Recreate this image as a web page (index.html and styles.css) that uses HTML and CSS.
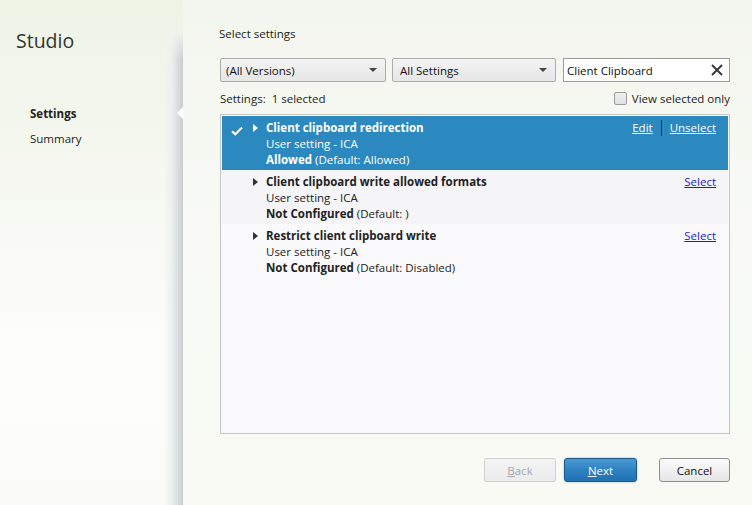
FILE: index.html
```html
<!DOCTYPE html>
<html>
<head>
<meta charset="utf-8">
<link rel="stylesheet" href="styles.css">
</head>
<body>
<div class="app">
  <aside class="sidebar">
    <div class="nav">
      <h1 class="brand">Studio</h1>
      <ul class="steps">
        <li class="step active">Settings</li>
        <li class="step">Summary</li>
      </ul>
    </div>
    <div class="shade"><span class="pointer"></span></div>
  </aside>
  <main class="main">
    <div class="heading">Select settings</div>
    <div class="filters">
      <div class="select sel-versions"><span>(All Versions)</span><span class="caret"></span></div>
      <div class="select sel-all"><span>All Settings</span><span class="caret"></span></div>
      <div class="search"><span>Client Clipboard</span>
        <svg class="clear" width="12" height="12" viewBox="0 0 12 12"><path d="M1 1L11 11M11 1L1 11" stroke="#333" stroke-width="1.8"/></svg>
      </div>
    </div>
    <div class="status">
      <span>Settings:&nbsp; 1 selected</span>
      <label class="check"><span class="box"></span>View selected only</label>
    </div>
    <div class="list">
      <div class="row selected">
        <div class="mark"><svg width="12" height="10" viewBox="0 0 12 10"><path d="M1 5.2L4.3 8.3L11 1.5" fill="none" stroke="#fff" stroke-width="2"/></svg></div>
        <div class="arrow"><span class="tri"></span></div>
        <div class="info">
          <div class="title">Client clipboard redirection</div>
          <div>User setting - ICA</div>
          <div><b>Allowed</b> (Default: Allowed)</div>
        </div>
        <div class="actions"><a>Edit</a><span class="sep"></span><a>Unselect</a></div>
      </div>
      <div class="row alt">
        <div class="mark"></div>
        <div class="arrow"><span class="tri"></span></div>
        <div class="info">
          <div class="title">Client clipboard write allowed formats</div>
          <div>User setting - ICA</div>
          <div><b>Not Configured</b> (Default: )</div>
        </div>
        <div class="actions"><a>Select</a></div>
      </div>
      <div class="row">
        <div class="mark"></div>
        <div class="arrow"><span class="tri"></span></div>
        <div class="info">
          <div class="title">Restrict client clipboard write</div>
          <div>User setting - ICA</div>
          <div><b>Not Configured</b> (Default: Disabled)</div>
        </div>
        <div class="actions"><a>Select</a></div>
      </div>
    </div>
    <div class="buttons">
      <button class="btn disabled"><u>B</u>ack</button>
      <button class="btn primary"><u>N</u>ext</button>
      <button class="btn cancel">Cancel</button>
    </div>
  </main>
</div>
</body>
</html>
```
FILE: styles.css
```css
* { box-sizing: border-box; }
html, body { margin: 0; padding: 0; }
body {
  width: 752px;
  height: 505px;
  overflow: hidden;
  font-family: "Open Sans", "Noto Sans", sans-serif;
  font-size: 11.5px;
  color: #222;
  background: linear-gradient(170deg, #eef3e6 0%, #f6f9f1 40%, #fbfcf8 100%);
}
.app { display: flex; height: 505px; }
.sidebar {
  width: 184px;
  display: flex;
  background: linear-gradient(180deg, #eef3e6 0%, #f6f8f1 35%, #fdfdfc 70%, #fbfcf7 100%);
}
.nav { flex: 1; }
.brand {
  margin: 29px 0 0 16px;
  font-size: 19.5px;
  font-weight: 400;
  color: #333;
  line-height: 24px;
}
.steps { list-style: none; margin: 48px 0 0 30px; padding: 0; }
.step { height: 25px; line-height: 25px; color: #222; }
.step.active { font-weight: 700; }
.shade {
  width: 19px;
  margin-top: 30px;
  position: relative;
  background: linear-gradient(90deg, rgba(255,255,255,0) 0%, #eceef0 40%, #d4d6da 85%, #c9cbcf 100%);
}
.shade::before {
  content: "";
  position: absolute;
  left: 0; right: 0; top: 0; height: 30px;
  background: linear-gradient(180deg, #f1f4ec, rgba(241,244,236,0));
}
.pointer {
  position: absolute;
  left: 13px;
  top: 77px;
  width: 0; height: 0;
  border-top: 6px solid transparent;
  border-bottom: 6px solid transparent;
  border-right: 6px solid #fff;
}
.main {
  flex: 1;
  padding: 25px 22px 0 36px;
  display: flex;
  flex-direction: column;
  background: linear-gradient(180deg, #f3f6ee 0%, #f9faf6 50%, #f8faf3 100%);
}
.heading { height: 18px; line-height: 18px; color: #222; }
.filters { display: flex; margin-top: 15px; height: 24px; }
.select {
  display: flex; align-items: center; justify-content: space-between;
  height: 24px;
  border: 1px solid #acacac;
  border-radius: 2px;
  background: linear-gradient(180deg, #f4f4f4, #e6e6e6);
  padding: 0 8px 0 5px;
  color: #111;
}
.sel-versions { width: 166px; margin-left: 1px; }
.sel-all { width: 164px; margin-left: 6px; padding-left: 7px; }
.caret {
  width: 0; height: 0;
  border-left: 4px solid transparent;
  border-right: 4px solid transparent;
  border-top: 4px solid #444;
}
.search {
  width: 167px; margin-left: 7px; height: 24px;
  border: 1px solid #9c9c9c;
  background: #fff;
  display: flex; align-items: center; justify-content: space-between;
  padding: 0 6px 0 3px; color: #111;
}
.status {
  display: flex; justify-content: space-between; align-items: center;
  height: 20px; margin-top: 6px; padding-left: 1px;
}
.check { display: flex; align-items: center; gap: 5px; margin-right: 0; }
.box {
  width: 13px; height: 13px;
  border: 1px solid #9a9a9a; border-radius: 2px;
  background: linear-gradient(180deg, #f0f0f0, #e0e0e0);
}
.list {
  margin-top: 6px;
  margin-left: 1px;
  height: 320px;
  border: 1px solid #c6c6c6;
  background: #fafafc;
  padding: 1px;
}
.row { display: flex; height: 54px; padding-top: 4px; line-height: 16px; color: #222; }
.row.alt { background: #f5f5f7; }
.row.selected { background: #2b89c0; color: #fff; }
.mark { width: 23px; padding: 4px 0 0 9px; }
.arrow { width: 21px; padding-left: 8px; padding-top: 4px; }
.tri {
  display: block; width: 0; height: 0;
  border-top: 4px solid transparent;
  border-bottom: 4px solid transparent;
  border-left: 5px solid #333;
}
.selected .tri { border-left-color: #fff; }
.info { flex: 1; }
.title { font-weight: 700; }
.actions { display: flex; align-items: flex-start; padding-right: 12px; }
.actions a { text-decoration: underline; color: #1a1ad0; }
.selected .actions a { color: #fff; }
.sep { width: 1px; height: 16px; background: #1a1aff; margin: 0 8px; }
.buttons {
  display: flex; justify-content: flex-end;
  margin-top: 24px; gap: 0;
}
.btn {
  height: 24px; font-family: inherit; font-size: 11.5px;
  border-radius: 3px; padding: 0;
}
.btn.disabled {
  width: 72px; color: #a8a8a8; border: 1px solid #d0d0d0;
  background: linear-gradient(180deg, #f4f4f4, #ebebeb);
}
.btn.primary {
  width: 73px; margin-left: 8px; color: #fff;
  border: 1px solid #1d5887;
  background: linear-gradient(180deg, #4a9ad2 0%, #2f81c1 50%, #2070b2 100%);
  box-shadow: 0 0 2px #7fb3de;
}
.btn.cancel {
  width: 71px; margin-left: 22px; color: #111;
  border: 1px solid #8e8e8e;
  background: linear-gradient(180deg, #fbfbfb, #e6e6e6);
}
```
